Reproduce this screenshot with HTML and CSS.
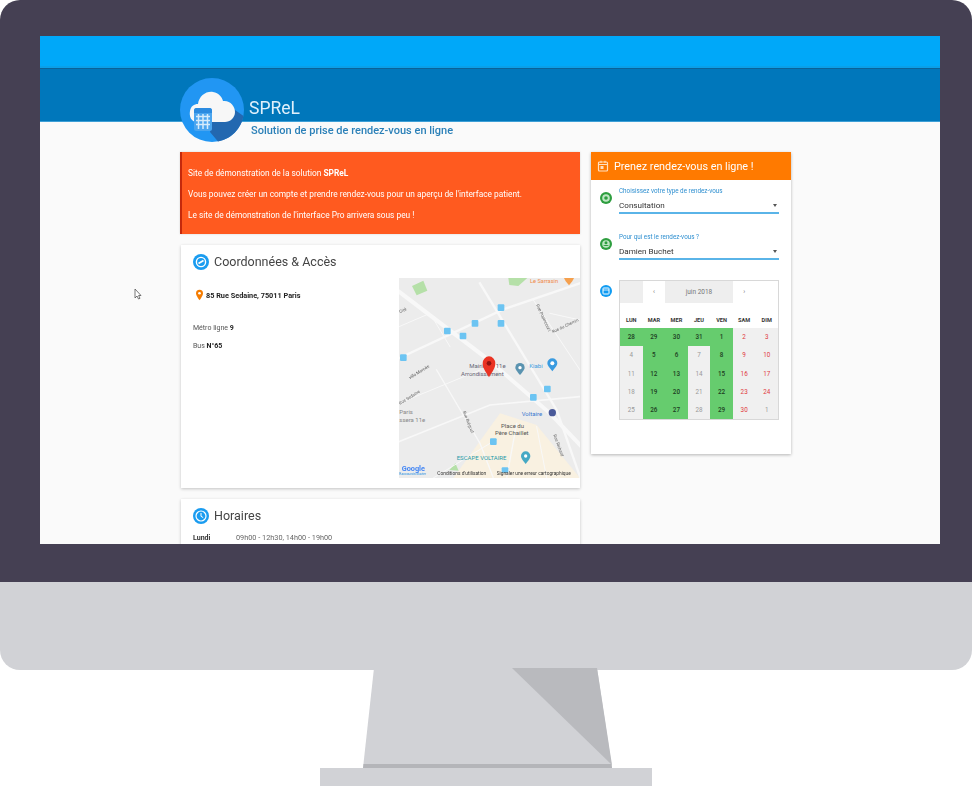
FILE: index.html
```html
<!DOCTYPE html>
<html lang="fr">
<head>
<meta charset="utf-8">
<title>SPReL</title>
<link rel="stylesheet" href="styles.css">
</head>
<body>
<div class="monitor">
  <div class="bezel">
    <div class="screen">
      <div class="topbar"></div>
      <div class="band"></div>
      <div class="brand">
        <svg class="logo" viewBox="0 0 64 64" aria-hidden="true">
          <circle cx="32" cy="32" r="32" fill="#2196f3"/>
          <path d="M32 44L52 36L55 32L63.500 38A32 32 0 0 1 38 63.500L30 54Z" fill="#2368b0"/>
          <path d="M17 44C11 44 9 38 10 33C11 28 14 26 18 26C19 18 26 13 33 14C39 15 42 19 43 23C50 22 55 28 55 34C55 40 50 44 45 44Z" fill="#f7f7f7"/>
          <rect x="14" y="30" width="18" height="23" rx="2.500" fill="#4aa5ef"/>
          <path d="M14 35V32.500A2.500 2.500 0 0 1 16.500 30H29.500A2.500 2.500 0 0 1 32 32.500V35Z" fill="#2b8be0"/>
          <path d="M16 38.500H30M16 42.500H30M16 46.500H30M18.500 36V51M23 36V51M27.500 36V51" stroke="#d5ebfb" stroke-width="1.500" fill="none"/>
        </svg>
        <div class="brand-text">
          <div class="brand-name">SPReL</div>
          <div class="brand-sub">Solution de prise de rendez-vous en ligne</div>
        </div>
      </div>
      <svg class="cursor" viewBox="0 0 8 12" aria-hidden="true"><path d="M1 1V10L3 8L4.500 11L6 10.300L4.600 7.500H7Z" fill="#fff" stroke="#555" stroke-width=".8"/></svg>
      <div class="main">
        <div class="left">
          <div class="alert">
            <p>Site de démonstration de la solution <b>SPReL</b></p>
            <p>Vous pouvez créer un compte et prendre rendez-vous pour un aperçu de l'interface patient.</p>
            <p>Le site de démonstration de l'interface Pro arrivera sous peu !</p>
          </div>
          <div class="card">
            <div class="card-head">
              <svg class="head-icon" viewBox="0 0 16 16" aria-hidden="true"><circle cx="8" cy="8" r="8" fill="#1a9cf0"/><circle cx="8" cy="8" r="4.600" fill="none" stroke="#fff" stroke-width="1.400"/><path d="M5.500 9.500L10.500 6.500" stroke="#fff" stroke-width="1.600"/></svg>
              <span>Coordonnées &amp; Accès</span>
            </div>
            <div class="access">
              <div class="access-info">
                <div class="address">
                  <svg class="pin" viewBox="0 0 8 12" aria-hidden="true"><path d="M4 0A4 4 0 0 0 0 4C0 7 4 12 4 12S8 7 8 4A4 4 0 0 0 4 0Z" fill="#f57c00"/><circle cx="4" cy="4" r="1.500" fill="#fff"/></svg>
                  <b>85 Rue Sedaine, 75011 Paris</b>
                </div>
                <p class="metro">Métro ligne <b>9</b></p>
                <p class="bus">Bus <b>N°65</b></p>
              </div>
              <svg class="map" viewBox="27 24 543 600" role="img" aria-label="Carte">
                <rect x="27" y="24" width="543" height="600" fill="#ececec"/>
                <path d="M190 624L330 430L440 465L570 624Z" fill="#f9f1e1"/>
                <path d="M66 48L100 32L112 62L80 76Z" fill="#b5e0a8"/>
                <path d="M355 24H412L385 48L358 45Z" fill="#b5e0a8"/>
                <path d="M178 600L196 580L206 602Z" fill="#b5e0a8"/>
                <g fill="none" stroke="#f8f8f8" stroke-linecap="square">
                  <path d="M27 65L290 265L480 430L570 525" stroke-width="12"/>
                  <path d="M27 265L340 118L570 40" stroke-width="7"/>
                  <path d="M270 40L500 420L570 620" stroke-width="7"/>
                  <path d="M27 515L300 405L570 380" stroke-width="5"/>
                  <path d="M140 300L270 520L310 624" stroke-width="4"/>
                  <path d="M27 170L120 130L180 230" stroke-width="3"/>
                  <path d="M27 400L270 300" stroke-width="3"/>
                  <path d="M430 90L570 300" stroke-width="3"/>
                  <path d="M380 460L350 624" stroke-width="4"/>
                  <path d="M480 130L570 150M130 624L300 520" stroke-width="3"/>
                  <path d="M440 470L470 624" stroke-width="3"/>
                </g>
                <g fill="#6cc4f2">
                  <rect x="323" y="103" width="20" height="20" rx="3"/><rect x="245" y="150" width="20" height="20" rx="3"/><rect x="323" y="150" width="20" height="20" rx="3"/>
                  <rect x="162" y="173" width="20" height="20" rx="3"/><rect x="209" y="188" width="20" height="20" rx="3"/><rect x="30" y="253" width="20" height="20" rx="3"/>
                  <rect x="462" y="347" width="20" height="20" rx="3"/><rect x="420" y="372" width="20" height="20" rx="3"/><rect x="300" y="505" width="20" height="20" rx="3"/>
                  <rect x="335" y="592" width="20" height="16" rx="3"/>
                </g>
                <g class="map-label">
                  <text x="420" y="40" font-size="17" fill="#f08a4b">Le Sarrasin</text>
                  <text x="238" y="295" font-size="18" fill="#667">Mairie du 11e</text>
                  <text x="213" y="317" font-size="18" fill="#667">Arrondissement</text>
                  <text x="418" y="293" font-size="18" fill="#3a9be0">Kiabi</text>
                  <text x="395" y="437" font-size="18" fill="#3a78d0">Voltaire</text>
                  <text x="333" y="474" font-size="18" fill="#555">Place du</text>
                  <text x="315" y="495" font-size="18" fill="#555">Père Chaillet</text>
                  <text x="200" y="570" font-size="18" fill="#1d9aa8">ESCAPE VOLTAIRE</text>
                  <text x="28" y="432" font-size="18" fill="#888">Paris</text>
                  <text x="28" y="455" font-size="18" fill="#888">ssera 11e</text>
                  <text x="60" y="328" font-size="13" fill="#555" transform="rotate(-32 60 328)">villa Marcès</text>
                  <text x="30" y="405" font-size="13" fill="#666" transform="rotate(-32 30 405)">Rue Sedaine</text>
                  <text x="218" y="425" font-size="13" fill="#666" transform="rotate(68 218 425)">Rue Bréguet</text>
                  <text x="488" y="190" font-size="13" fill="#666" transform="rotate(-25 488 190)">Rue du Chemin</text>
                  <text x="438" y="105" font-size="13" fill="#666" transform="rotate(65 438 105)">Rue Popincourt</text>
                  <text x="30" y="130" font-size="13" fill="#666" transform="rotate(-25 30 130)">Cité</text>
                  <text x="490" y="495" font-size="13" fill="#666" transform="rotate(70 490 495)">Rue Richard</text>
                  <text x="35" y="604" font-size="22" font-weight="700" fill="#4285f4">Google</text>
                  <text x="28" y="616" font-size="10" fill="#2a8fe0">Raccourcis clavier</text>
                  <text x="142" y="615" font-size="14.500" fill="#333">Conditions d'utilisation</text>
                  <text x="320" y="615" font-size="14.500" fill="#333">Signaler une erreur cartographique</text>
                </g>
                <g fill="#45a9c4">
                  <path d="M390 315C380 303 376 297 376 293A14 14 0 0 1 404 293C404 297 400 303 390 315Z" fill="#5a93b0"/>
                  <path d="M487 304C477 292 472 286 472 280A15 15 0 0 1 502 280C502 286 497 292 487 304Z" fill="#3a9be0"/>
                  <path d="M407 582C397 570 393 564 393 558A14 14 0 0 1 421 558C421 564 417 570 407 582Z"/>
                  <path d="M537 46C530 38 524 30 522 24H552C550 30 544 38 537 46Z" fill="#f5a04e"/>
                </g>
                <circle cx="390" cy="293" r="5" fill="#fff"/><circle cx="487" cy="280" r="6" fill="#fff"/><circle cx="407" cy="558" r="5" fill="#fff"/>
                <circle cx="487" cy="428" r="11" fill="#4a5a9a"/>
                <path d="M297 322C288 306 278 296 278 280A19 21 0 0 1 316 280C316 296 306 306 297 322Z" fill="#ea3323"/>
                <circle cx="297" cy="280" r="7" fill="#8f1410"/>
              </svg>
            </div>
          </div>
          <div class="card">
            <div class="card-head">
              <svg class="head-icon" viewBox="0 0 16 16" aria-hidden="true"><circle cx="8" cy="8" r="8" fill="#1a9cf0"/><circle cx="8" cy="8" r="5" fill="none" stroke="#fff" stroke-width="1.200"/><path d="M8 5V8.300L10.200 9.600" fill="none" stroke="#fff" stroke-width="1"/></svg>
              <span>Horaires</span>
            </div>
            <div class="hours"><b>Lundi</b><span>09h00 - 12h30, 14h00 - 19h00</span></div>
          </div>
        </div>
        <div class="booking">
          <div class="booking-head">
            <svg class="cal-icon" viewBox="0 0 12 12" aria-hidden="true"><rect x="1.500" y="2" width="9" height="9" rx="1" fill="none" stroke="#ffe0c0" stroke-width="1.200"/><path d="M1.500 4.500H10.500M4 .8V3M8 .8V3" stroke="#ffe0c0" stroke-width="1.100"/><rect x="3.500" y="6" width="3" height="3" fill="#ffe0c0"/></svg>
            <span>Prenez rendez-vous en ligne !</span>
          </div>
          <div class="booking-body">
            <div class="row">
              <svg class="step" viewBox="0 0 12 12" aria-hidden="true"><circle cx="6" cy="6" r="6" fill="#2e9e3f"/><circle cx="6" cy="6" r="3.800" fill="#bfe6c4"/><circle cx="6" cy="6" r="1.800" fill="#2e9e3f"/></svg>
              <div class="field">
                <div class="field-label">Choisissez votre type de rendez-vous</div>
                <div class="field-value"><span>Consultation</span><i class="caret"></i></div>
                <div class="field-line"></div>
              </div>
            </div>
            <div class="row">
              <svg class="step" viewBox="0 0 12 12" aria-hidden="true"><circle cx="6" cy="6" r="6" fill="#2e9e3f"/><circle cx="6" cy="6" r="3.800" fill="#bfe6c4"/><path d="M3 8C3.500 6.500 8.500 6.500 9 8M6 3.200A1.500 1.500 0 0 1 6 6.200A1.500 1.500 0 0 1 6 3.200" fill="#2e9e3f"/></svg>
              <div class="field">
                <div class="field-label">Pour qui est le rendez-vous ?</div>
                <div class="field-value"><span>Damien Buchet</span><i class="caret"></i></div>
                <div class="field-line"></div>
              </div>
            </div>
            <div class="row">
              <svg class="step" viewBox="0 0 12 12" aria-hidden="true"><circle cx="6" cy="6" r="6" fill="#0f9bf2"/><rect x="3" y="3" width="6" height="6" rx=".6" fill="none" stroke="#fff" stroke-width="1"/><path d="M3 5H9" stroke="#fff" stroke-width=".8"/></svg>
              <div class="calendar">
                <div class="cal-nav">
                  <span class="shade"></span><span>‹</span><span class="shade month">juin 2018</span><span>›</span><span></span>
                </div>
                <div class="cal-grid">
                  <span class="dow">LUN</span><span class="dow">MAR</span><span class="dow">MER</span><span class="dow">JEU</span><span class="dow">VEN</span><span class="dow">SAM</span><span class="dow">DIM</span>
                  <span class="on">28</span><span class="on">29</span><span class="on">30</span><span class="on">31</span><span class="on">1</span><span class="we">2</span><span class="we">3</span>
                  <span class="off">4</span><span class="on">5</span><span class="on">6</span><span class="off">7</span><span class="on">8</span><span class="we">9</span><span class="we">10</span>
                  <span class="off">11</span><span class="on">12</span><span class="on">13</span><span class="off">14</span><span class="on">15</span><span class="we">16</span><span class="we">17</span>
                  <span class="off">18</span><span class="on">19</span><span class="on">20</span><span class="off">21</span><span class="on">22</span><span class="we">23</span><span class="we">24</span>
                  <span class="off">25</span><span class="on">26</span><span class="on">27</span><span class="off">28</span><span class="on">29</span><span class="we">30</span><span class="off">1</span>
                </div>
              </div>
            </div>
          </div>
        </div>
      </div>
    </div>
  </div>
  <div class="chin"></div>
  <svg class="stand" viewBox="0 668 972 118" aria-hidden="true">
    <path d="M374 668H597L612 768H363Z" fill="#d1d2d6"/>
    <path d="M512 668H597L612 765Z" fill="#b9babe"/>
    <path d="M363.500 764H611.500L612 768H363Z" fill="#b4b5b9"/>
    <rect x="320" y="768" width="332" height="18" fill="#d1d2d6"/>
  </svg>
</div>
</body>
</html>
```

FILE: styles.css
```css
* { box-sizing: border-box; }
html, body { margin: 0; padding: 0; background: #fff; }
body { width: 972px; height: 786px; overflow: hidden; font-family: Roboto, "Liberation Sans", sans-serif; }
p { margin: 0; }

.monitor { width: 972px; display: flex; flex-direction: column; }
.bezel { height: 582px; padding: 36px 32px 38px 40px; background: #454053; border-radius: 20px 20px 0 0; }
.chin { height: 88px; background: #d1d2d6; border-radius: 0 0 20px 20px; }
.stand { display: block; width: 972px; height: 118px; margin-top: -2px; }

.screen { position: relative; width: 900px; height: 508px; overflow: hidden; background: #fafafa; }
.topbar { height: 32px; background: #00a8f9; box-shadow: inset 0 -2px 0 #0b9fe8; }
.band { height: 54px; background: #0077bb; border-top: 1px solid #0a6299; border-bottom: 1px solid #3d9fd6; }

.brand { position: absolute; left: 140px; top: 42px; display: flex; filter: blur(.45px); }
.logo { width: 64px; height: 64px; display: block; }
.brand-text { padding: 20px 0 0 5px; }
.brand-name { font-size: 17.500px; line-height: 20px; color: #dff0fb; }
.brand-sub { margin: 6px 0 0 2px; font-size: 11px; line-height: 14px; font-weight: 500; color: #2b80b8; white-space: nowrap; }

.cursor { position: absolute; left: 94px; top: 252px; width: 8px; height: 12px; }

.main { display: flex; align-items: flex-start; gap: 11px; padding: 30px 0 0 140px; filter: blur(.5px); }
.left { width: 400px; display: flex; flex-direction: column; gap: 11px; }

.alert { height: 82px; padding: 16px 8px 0 6px; display: flex; flex-direction: column; gap: 11px; background: #ff5a1f; border-left: 2px solid #c4290c; font-size: 8.350px; line-height: 10px; color: #fff; white-space: nowrap; box-shadow: 0 0 2px rgba(0,0,0,.15); }

.card { margin-left: 1px; background: #fff; box-shadow: 0 1px 3px rgba(0,0,0,.22); }
.card-head { height: 33px; padding-left: 12px; display: flex; align-items: center; gap: 5px; font-size: 12.500px; color: #444; }
.card-head span { margin-top: -1px; }
.head-icon { width: 16px; height: 16px; }
.access { display: flex; justify-content: space-between; padding-bottom: 10px; }
.access-info { padding: 11px 0 0 15px; font-size: 7px; line-height: 10px; color: #555; }
.access-info b { color: #222; font-size: 7.300px; margin-top: 1px; }
.address { display: flex; align-items: center; gap: 3px; height: 12px; white-space: nowrap; }
.pin { width: 7px; height: 12px; }
.metro { margin: 22px 0 0 -3px; }
.metro b, .bus b { font-size: 7px; }
.bus { margin: 8px 0 0 -3px; }
.map { display: block; width: 181px; height: 200px; filter: blur(.3px); }
.map-label { font-family: Roboto, "Liberation Sans", sans-serif; }

.hours { height: 60px; padding-left: 12px; display: flex; font-size: 7.300px; line-height: 12px; color: #666; }
.hours b { width: 43px; color: #333; font-size: 7px; }

.booking { width: 200px; background: #fff; box-shadow: 0 1px 3px rgba(0,0,0,.28); }
.booking-head { height: 28px; padding-left: 6px; display: flex; align-items: center; gap: 5px; background: #ff7a00; color: #fff; font-size: 10.800px; white-space: nowrap; }
.cal-icon { width: 12px; height: 12px; }
.booking-body { padding: 7px 12px 34px 9px; display: flex; flex-direction: column; gap: 19px; }
.row { display: flex; gap: 7px; align-items: flex-start; }
.row:last-child { margin-top: 1px; }
.step { width: 12px; height: 12px; margin-top: 5px; flex: none; }
.field { width: 160px; }
.field-label { font-size: 6.300px; line-height: 8px; color: #2e8fd0; white-space: nowrap; }
.field-value { margin-top: 3px; padding-top: 1px; height: 13px; display: flex; justify-content: space-between; align-items: center; padding-right: 2px; font-size: 8.100px; line-height: 12px; color: #333; }
.caret { width: 0; height: 0; border: 2.500px solid transparent; border-top: 3px solid #555; border-bottom: 0; }
.field-line { height: 2px; margin-top: 1px; background: #5ab4e8; }

.calendar { width: 160px; border: 1px solid #d8d8d8; background: #fff; }
.cal-nav { display: grid; grid-template-columns: repeat(7, 1fr); height: 22px; font-size: 6.500px; color: #777; text-align: center; line-height: 22px; }
.month { grid-column: span 3; }
.shade { background: #eee; }
.cal-grid { display: grid; grid-template-columns: repeat(7, 1fr); grid-template-rows: 25px; grid-auto-rows: 18.300px; font-size: 6.300px; line-height: 18.300px; text-align: center; }
.dow { height: 25px; line-height: 10px; padding-top: 12px; font-size: 5.600px; font-weight: 700; color: #333; }
.on { background: #66cc6e; color: #1d3d22; font-weight: 500; }
.off { background: #f0f0f0; color: #999; }
.we { background: #f0f0f0; color: #e0393e; }
```
